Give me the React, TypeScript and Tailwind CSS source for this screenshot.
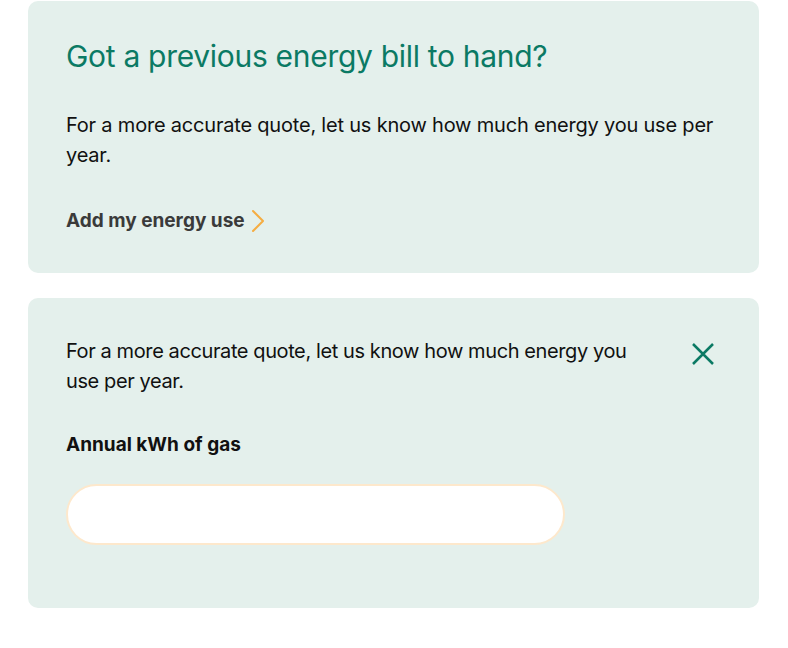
export default function App() {
  return (
    <div className="w-[788px] h-[648px] bg-white pl-[28px] pr-[29px] pt-[1px] font-['Inter',sans-serif] text-[#111111]">
      {/* Previous bill prompt */}
      <div className="rounded-[10px] bg-[#e4f0ec] px-[38px] pt-[37px] pb-[38px]">
        <h2 className="text-[30px] leading-[36px] font-normal tracking-[-0.01em] text-[#0b7a64]">
          Got a previous energy bill to hand?
        </h2>
        <p className="mt-[36px] text-[20px] leading-[30px] tracking-[-0.01em]">
          For a more accurate quote, let us know how much energy you use per year.
        </p>
        <a href="#" className="mt-[37px] flex items-center gap-[6px] text-[19px] leading-[28px] font-bold text-[#3a3a3a]">
          Add my energy use
          <svg width="14" height="24" viewBox="0 0 14 24" fill="none">
            <path d="M2 2L12 12L2 22" stroke="#f5ad42" strokeWidth="2" strokeLinecap="round" strokeLinejoin="round" />
          </svg>
        </a>
      </div>

      {/* Energy use form */}
      <div className="mt-[25px] rounded-[10px] bg-[#e4f0ec] pl-[38px] pr-[45px] pt-[38px] pb-[63px]">
        <div className="flex items-start justify-between">
          <p className="w-[590px] text-[20px] leading-[30px] tracking-[-0.02em]">
            For a more accurate quote, let us know how much energy you use per year.
          </p>
          <button className="mt-[7px] text-[#0b7a64]" aria-label="Close">
            <svg width="22" height="22" viewBox="0 0 22 22" fill="none">
              <path d="M1 1L21 21M21 1L1 21" stroke="currentColor" strokeWidth="2.5" />
            </svg>
          </button>
        </div>
        <label className="mt-[35px] block text-[19px] leading-[28px] font-bold">
          Annual kWh of gas
        </label>
        <input
          type="text"
          className="mt-[25px] block w-[499px] h-[61px] rounded-full border-2 border-[#fde8cc] bg-white px-6 outline-none"
        />
      </div>
    </div>
  );
}
